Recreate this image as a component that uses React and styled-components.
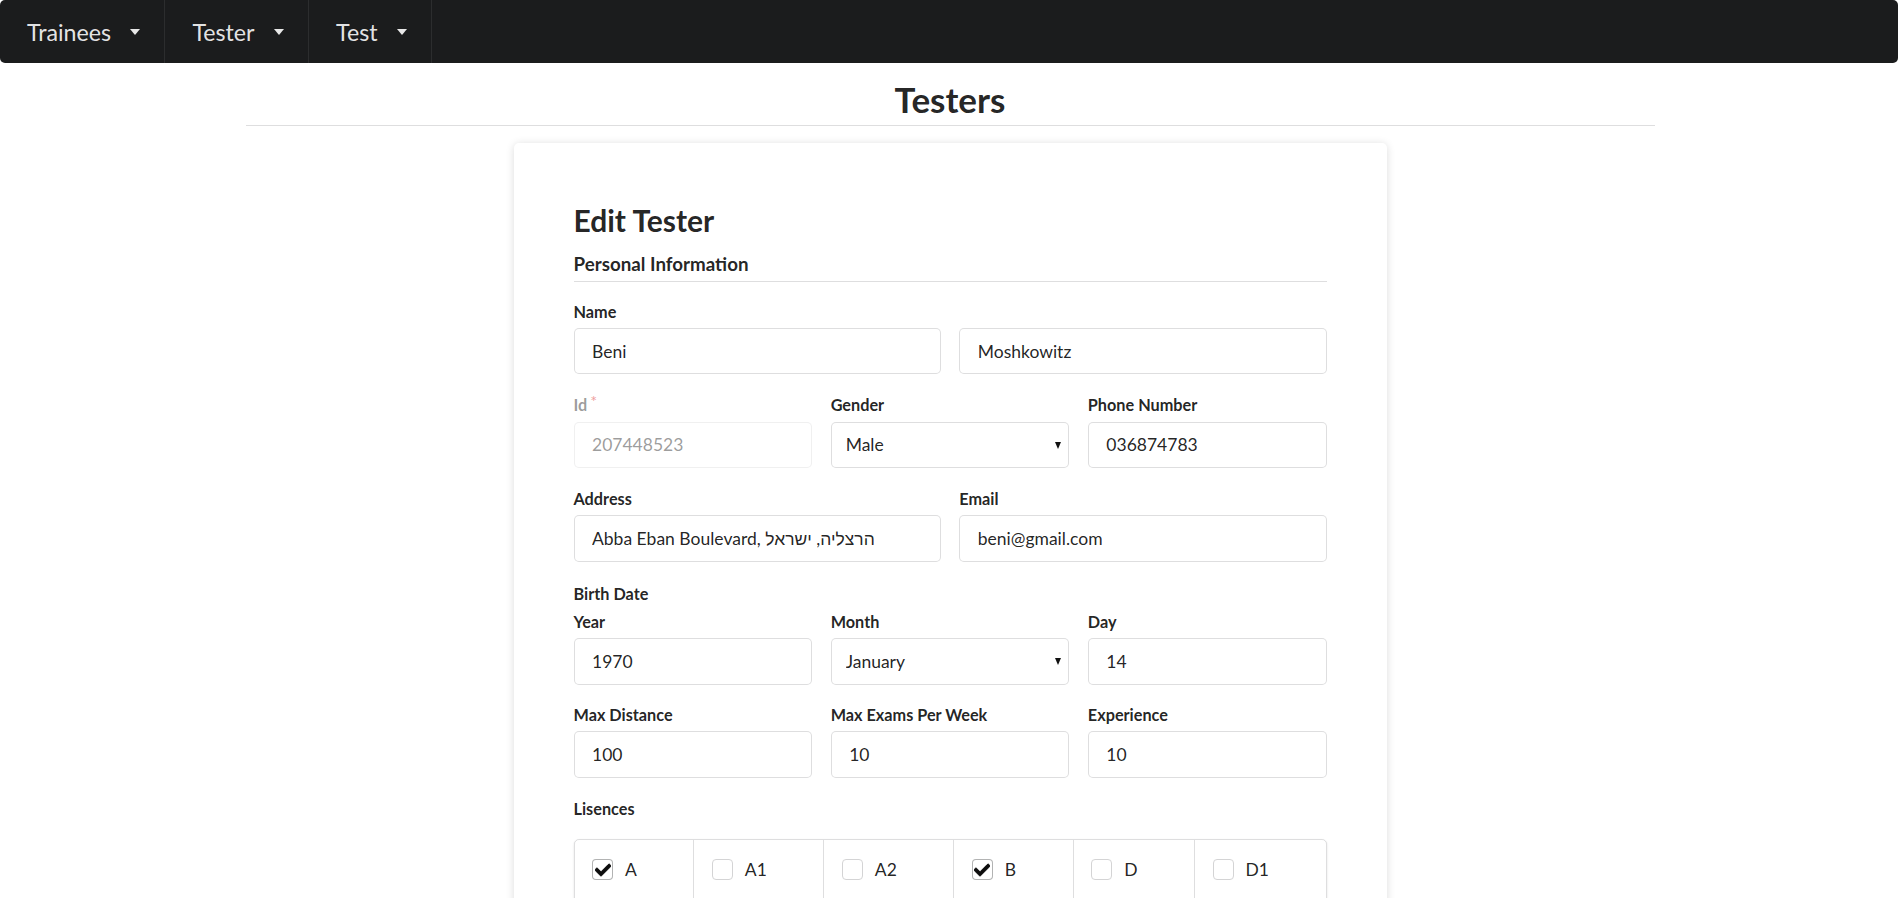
import React from "react";
import styled, { createGlobalStyle } from "styled-components";
import { FaCheck } from "react-icons/fa";

const licences = [
  { name: "A", checked: true },
  { name: "A1", checked: false },
  { name: "A2", checked: false },
  { name: "B", checked: true },
  { name: "D", checked: false },
  { name: "D1", checked: false },
];

const App = () => {
  return (
    <>
      <GlobalStyle />
      <Menu>
        {["Trainees", "Tester", "Test"].map((item) => (
          <MenuItem key={item}>
            {item}
            <Caret />
          </MenuItem>
        ))}
      </Menu>
      <Page>
        <PageTitle>Testers</PageTitle>
        <Card>
          <FormTitle>Edit Tester</FormTitle>
          <SectionHeader>Personal Information</SectionHeader>

          <Group>
            <Label>Name</Label>
            <Row cols={2}>
              <Input defaultValue="Beni" />
              <Input defaultValue="Moshkowitz" />
            </Row>
          </Group>

          <Row cols={3}>
            <div>
              <Label disabled>
                Id<Star>*</Star>
              </Label>
              <Input defaultValue="207448523" disabled />
            </div>
            <div>
              <Label>Gender</Label>
              <SelectWrap>
                <Select defaultValue="Male">
                  <option>Male</option>
                  <option>Female</option>
                </Select>
              </SelectWrap>
            </div>
            <div>
              <Label>Phone Number</Label>
              <Input defaultValue="036874783" />
            </div>
          </Row>

          <Row cols={2} gapBelow={20}>
            <div>
              <Label>Address</Label>
              <Input defaultValue="Abba Eban Boulevard, הרצליה, ישראל" />
            </div>
            <div>
              <Label>Email</Label>
              <Input defaultValue="beni@gmail.com" />
            </div>
          </Row>

          <Group>
            <Label>Birth Date</Label>
            <Row cols={3} gapBelow={18.5}>
              <div>
                <Label>Year</Label>
                <Input defaultValue="1970" />
              </div>
              <div>
                <Label>Month</Label>
                <SelectWrap>
                  <Select defaultValue="January">
                    <option>January</option>
                    <option>February</option>
                  </Select>
                </SelectWrap>
              </div>
              <div>
                <Label>Day</Label>
                <Input defaultValue="14" />
              </div>
            </Row>
          </Group>

          <Row cols={3}>
            <div>
              <Label>Max Distance</Label>
              <Input defaultValue="100" />
            </div>
            <div>
              <Label>Max Exams Per Week</Label>
              <Input defaultValue="10" />
            </div>
            <div>
              <Label>Experience</Label>
              <Input defaultValue="10" />
            </div>
          </Row>

          <Label>Lisences</Label>
          <Segments>
            {licences.map((l) => (
              <Segment key={l.name}>
                <Box checked={l.checked}>{l.checked && <FaCheck />}</Box>
                <CheckLabel>{l.name}</CheckLabel>
              </Segment>
            ))}
          </Segments>
        </Card>
      </Page>
    </>
  );
};

export default App;

const GlobalStyle = createGlobalStyle`
  * {
    box-sizing: border-box;
  }
  body {
    margin: 0;
    background: #fff;
    font-family: Lato, "Liberation Sans", "Noto Sans", "DejaVu Sans", sans-serif;
    font-size: 17.5px;
    color: rgba(0, 0, 0, 0.87);
  }
`;

const Menu = styled.div`
  display: flex;
  height: 63px;
  margin-right: 2px;
  background: #1b1c1d;
  border-radius: 5px;
`;

const MenuItem = styled.div`
  display: flex;
  align-items: center;
  gap: 19px;
  padding: 0 24.5px 0 27px;
  font-size: 23.2px;
  color: rgba(255, 255, 255, 0.9);
  border-right: 1px solid rgba(255, 255, 255, 0.08);
`;

const Caret = styled.span`
  width: 0;
  height: 0;
  margin-top: 1px;
  border-left: 5.5px solid transparent;
  border-right: 5.5px solid transparent;
  border-top: 6px solid rgba(255, 255, 255, 0.9);
`;

const Page = styled.div`
  width: 1409px;
  margin: 0 auto;
`;

const PageTitle = styled.h1`
  margin: 14px 0 0;
  padding-bottom: 3px;
  text-align: center;
  font-size: 35px;
  line-height: 45px;
  font-weight: 700;
  border-bottom: 1px solid rgba(34, 36, 38, 0.15);
`;

const Card = styled.div`
  width: 873px;
  margin: 17px auto 0;
  padding: 58px 60px 40px;
  background: #fff;
  border-radius: 5px;
  box-shadow: 0 1px 8px rgba(0, 0, 0, 0.14);
`;

const FormTitle = styled.h2`
  margin: 0;
  font-size: 30px;
  line-height: 1.2857;
  font-weight: 700;
`;

const SectionHeader = styled.h4`
  margin: 12px 0 18px;
  padding-bottom: 5px;
  font-size: 18.75px;
  line-height: 1.2857;
  font-weight: 700;
  border-bottom: 1px solid rgba(34, 36, 38, 0.15);
`;

const Group = styled.div``;

const Row = styled.div`
  display: grid;
  grid-template-columns: repeat(${(p) => p.cols}, 1fr);
  column-gap: 18.5px;
  margin-bottom: ${(p) => p.gapBelow || 19}px;
`;

const Label = styled.label`
  display: block;
  margin-bottom: 5px;
  font-size: 16.25px;
  line-height: 23.2px;
  font-weight: 700;
  opacity: ${(p) => (p.disabled ? 0.45 : 1)};
`;

const Star = styled.span`
  display: inline-block;
  margin: -4px 0 0 3px;
  vertical-align: top;
  font-weight: 400;
  color: #db2828;
`;

const Input = styled.input`
  display: block;
  width: 100%;
  height: 46.5px;
  padding: 0 17.5px;
  font-family: inherit;
  font-size: 17.5px;
  color: rgba(0, 0, 0, 0.87);
  background: #fff;
  border: 1px solid rgba(34, 36, 38, 0.15);
  border-radius: 5px;
  outline: none;

  &:disabled {
    opacity: 0.45;
  }
`;

const SelectWrap = styled.div`
  position: relative;

  &::after {
    content: "";
    position: absolute;
    right: 8px;
    top: 20px;
    border-left: 3.5px solid transparent;
    border-right: 3.5px solid transparent;
    border-top: 7px solid #111;
    pointer-events: none;
  }
`;

const Select = styled.select`
  display: block;
  width: 100%;
  height: 46.5px;
  padding: 0 14px;
  appearance: none;
  font-family: inherit;
  font-size: 17.5px;
  color: rgba(0, 0, 0, 0.87);
  background: #fff;
  border: 1px solid rgba(34, 36, 38, 0.15);
  border-radius: 5px;
  outline: none;
`;

const Segments = styled.div`
  display: flex;
  margin-top: 19px;
  border: 1px solid rgba(34, 36, 38, 0.15);
  border-radius: 5px;
  box-shadow: 0 1px 2px 0 rgba(34, 36, 38, 0.15);
`;

const Segment = styled.div`
  display: flex;
  align-items: center;
  flex: 1 1 auto;
  padding: 19px 17.5px 24px;

  & + & {
    border-left: 1px solid rgba(34, 36, 38, 0.15);
  }
`;

const Box = styled.span`
  display: flex;
  align-items: center;
  justify-content: center;
  width: 21px;
  height: 21px;
  margin-right: 12px;
  background: #fff;
  border: 1px solid ${(p) => (p.checked ? "rgba(34, 36, 38, 0.35)" : "#d4d4d5")};
  border-radius: 4px;
  color: rgba(0, 0, 0, 0.95);
  font-size: 16px;

  svg {
    stroke: currentColor;
    stroke-width: 30px;
  }
`;

const CheckLabel = styled.span`
  font-size: 17.5px;
  line-height: 21px;
`;
